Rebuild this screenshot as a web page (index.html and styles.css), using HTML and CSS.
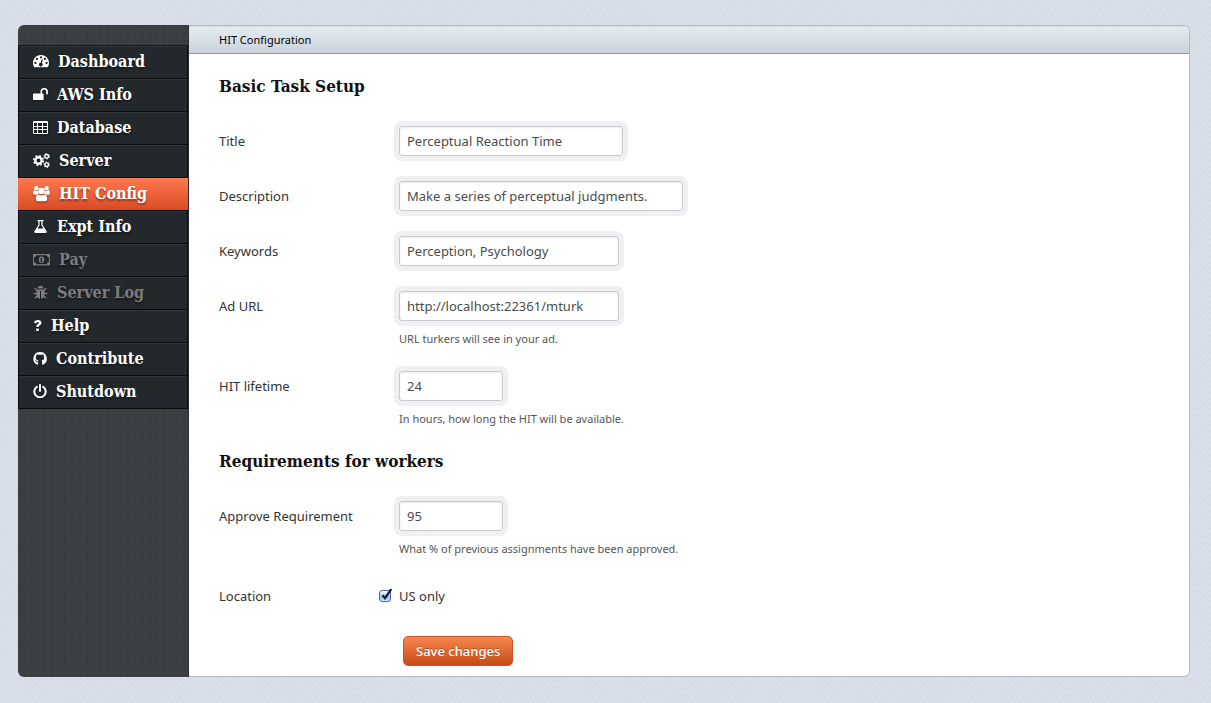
FILE: index.html
```html
<!DOCTYPE html>
<html lang="en">
<head>
<meta charset="utf-8">
<title>HIT Configuration</title>
<link rel="stylesheet" href="styles.css">
</head>
<body>
<div class="app">
  <nav class="sidebar">
    <ul class="nav">
      <li><a class="nav-link" href="#dashboard"><svg width="16" height="16" viewBox="0 0 16 16"><path fill-rule="evenodd" d="M8 1a8 8 0 0 1 8 8c0 1.500-.4 3-1.200 4.200H1.200A8 8 0 0 1 8 1zM8 2.200a1.100 1.100 0 1 0 0 2.200 1.100 1.100 0 0 0 0-2.200zM4 3.800A1.100 1.100 0 1 0 4 6a1.100 1.100 0 0 0 0-2.200zM12 3.800A1.100 1.100 0 1 0 12 6a1.100 1.100 0 0 0 0-2.200zM2.400 7.800a1.100 1.100 0 1 0 0 2.200 1.100 1.100 0 0 0 0-2.200zM13.600 7.800a1.100 1.100 0 1 0 0 2.200 1.100 1.100 0 0 0 0-2.200zM8.700 5.300 7.600 8.700a1.800 1.800 0 1 0 1.200.300l1-3.400z"/></svg>Dashboard</a></li>
      <li><a class="nav-link" href="#aws"><svg width="15" height="16" viewBox="0 0 15 16"><path d="M1 6.500h6.500V4.600a3.700 3.700 0 0 1 7.400 0v2.200q0 .6-.6.600h-.6q-.5 0-.5-.6V4.600a2 2 0 0 0-4.100 0v1.900h.6q.9 0 .9.900v4.800q0 .9-.9.900H.9Q0 13.100 0 12.200V7.400q0-.9 1-.9z"/></svg>AWS Info</a></li>
      <li><a class="nav-link" href="#database"><svg width="15" height="16" viewBox="0 0 15 16"><path fill-rule="evenodd" d="M1.200 1h12.600Q15 1 15 2.200v10.600q0 1.200-1.200 1.200H1.200Q0 14 0 12.800V2.200Q0 1 1.200 1zM1 3v3h3V3zm4 0v3h4V3zm5 0v3h4V3zM1 7v2h3V7zm4 0v2h4V7zm5 0v2h4V7zM1 10v3h3v-3zm4 0v3h4v-3zm5 0v3h4v-3z"/></svg>Database</a></li>
      <li><a class="nav-link" href="#server"><svg width="17" height="16" viewBox="0 0 17 16" fill="none"><circle cx="5.500" cy="7.500" r="3.200" stroke="currentColor" stroke-width="2.400"/><circle cx="5.500" cy="7.500" r="4.900" stroke="currentColor" stroke-width="1.500" stroke-dasharray="2 1.850"/><circle cx="13.700" cy="3.300" r="1.800" stroke="currentColor" stroke-width="1.400"/><circle cx="13.700" cy="3.300" r="2.800" stroke="currentColor" stroke-width="1" stroke-dasharray="1.400 1.530"/><circle cx="13.700" cy="11.700" r="1.800" stroke="currentColor" stroke-width="1.400"/><circle cx="13.700" cy="11.700" r="2.800" stroke="currentColor" stroke-width="1" stroke-dasharray="1.400 1.530"/></svg>Server</a></li>
      <li><a class="nav-link active" aria-current="page" href="#hit"><svg width="17" height="16" viewBox="0 0 17 16"><circle cx="3.400" cy="2.200" r="2.200"/><circle cx="13.600" cy="2.200" r="2.200"/><path d="M0 7q0-3 1.300-3 2 1.400 3.900.7-.2 1.900.9 3.100-1.500 0-2.300 1H1.500Q0 8.800 0 7zM17 7q0-3-1.300-3-2 1.400-3.900.7.2 1.900-.9 3.100 1.500 0 2.300 1h2.300q1.500 0 1.500-1.800z"/><circle cx="8.500" cy="5" r="3.200"/><path d="M2.800 13q0-4.600 2.700-4.600 3 2 6 0 2.700 0 2.700 4.600 0 2.300-2.200 2.300H5q-2.200 0-2.200-2.300z"/></svg>HIT Config</a></li>
      <li><a class="nav-link" href="#expt"><svg width="15" height="16" viewBox="0 0 15 16"><path fill-rule="evenodd" d="M4.500 1h6v1.200h-.9v3.700l3.900 6.200q.9 1.900-1.200 1.900H2.700q-2.100 0-1.200-1.900l3.900-6.200V2.200h-.9zM6.600 2.200v4L4.500 9.500h6L8.400 6.200v-4z"/></svg>Expt Info</a></li>
      <li><a class="nav-link muted" href="#pay"><svg width="17" height="16" viewBox="0 0 17 16"><path fill-rule="evenodd" d="M0 2h17v11.500H0zM3.300 3.200a2.200 2.200 0 0 1-2.200 2.100v4.900a2.200 2.200 0 0 1 2.200 2.100h10.400a2.200 2.200 0 0 1 2.200-2.100V5.300a2.200 2.200 0 0 1-2.200-2.100zM8.500 4.500q2.700 0 2.700 3.200t-2.700 3.300-2.700-3.300T8.500 4.500zm-.4 1.500L7 6.900l.5.500.4-.300V9h-.8v.8h2.800V9H9V6z"/></svg>Pay</a></li>
      <li><a class="nav-link muted" href="#log"><svg width="15" height="16" viewBox="0 0 15 16"><path d="M4.600 3.600a2.900 2.900 0 0 1 5.800 0zM3.500 4.500h8v5.500q0 3.500-3.500 3.700V6H7v7.700q-3.500-.2-3.500-3.700z"/><path d="M4 5.500 1.700 3.200M11 5.500l2.300-2.300M4 8.500H.6M11 8.500h3.400M4.300 10.800l-2.500 2.500M10.700 10.800l2.500 2.500" fill="none" stroke="currentColor" stroke-width="1.300"/></svg>Server Log</a></li>
      <li><a class="nav-link" href="#help"><svg width="9" height="16" viewBox="0 0 9 16"><path d="M1 4.700Q1.500 2 4.700 2q3.800 0 3.800 3 0 1.700-2.200 2.800-.6.400-.6 1.300H3.300q-.1-2.100 1.300-2.800 1.200-.7 1.200-1.400 0-.9-1.100-.9-1 0-1.700 1.500zM3.200 10.500h2.600v2.600H3.200z"/></svg>Help</a></li>
      <li><a class="nav-link" href="#contribute"><svg width="14" height="16" viewBox="0 0 14 16"><path d="M7 1a6.700 6.700 0 0 0-2.700 12.800q.8.200.8-.4v-2.200q-1.800.3-2.300-1-.3-.7-.8-1 1-.3 1.600.8.500.7 1.500.4l.3-.8Q2.700 9.200 2.800 6.800q0-1 .7-1.800-.2-.8.1-1.700.9 0 1.800.7 1.600-.4 3.200 0 .9-.7 1.800-.7.3.9.100 1.700.7.800.7 1.800.1 2.400-2.600 2.800.5.500.5 1.400v2.400q0 .6.800.4A6.700 6.700 0 0 0 7 1z"/></svg>Contribute</a></li>
      <li><a class="nav-link" href="#shutdown"><svg width="14" height="16" viewBox="0 0 14 16"><path d="M3.800 2.900a5.700 5.700 0 1 0 6.400 0M7 1v6" fill="none" stroke="currentColor" stroke-width="2" stroke-linecap="round"/></svg>Shutdown</a></li>
    </ul>
  </nav>
  <main class="panel">
    <header class="panel-header">HIT Configuration</header>
    <form class="form">
      <h2 class="heading">Basic Task Setup</h2>
      <div class="row"><label class="label" for="title">Title</label><div class="field"><input class="input medium" id="title" type="text" value="Perceptual Reaction Time"></div></div>
      <div class="row"><label class="label" for="description">Description</label><div class="field"><input class="input large" id="description" type="text" value="Make a series of perceptual judgments."></div></div>
      <div class="row"><label class="label" for="keywords">Keywords</label><div class="field"><input class="input" id="keywords" type="text" value="Perception, Psychology"></div></div>
      <div class="row"><label class="label" for="url">Ad URL</label><div class="field"><input class="input" id="url" type="text" value="http://localhost:22361/mturk"><p class="help">URL turkers will see in your ad.</p></div></div>
      <div class="row"><label class="label" for="lifetime">HIT lifetime</label><div class="field"><input class="input small" id="lifetime" type="text" value="24"><p class="help">In hours, how long the HIT will be available.</p></div></div>
      <h2 class="heading">Requirements for workers</h2>
      <div class="row"><label class="label" for="approve">Approve Requirement</label><div class="field"><input class="input small" id="approve" type="text" value="95"><p class="help">What % of previous assignments have been approved.</p></div></div>
      <div class="row"><span class="label narrow">Location</span><label class="check"><span class="box"><input class="checkbox" type="checkbox" checked><svg class="tick" width="14" height="14" viewBox="0 0 14 14"><path d="M3.500 7.200 6 10.200 12.300 1.200" fill="none" stroke="#0b1733" stroke-width="2.200"/></svg></span>US only</label></div>
      <div class="actions"><button class="save" type="button">Save changes</button></div>
    </form>
  </main>
</div>
</body>
</html>
```
FILE: styles.css
```css
* { box-sizing: border-box; }

body {
  margin: 0;
  color: #333;
  font: 13px/20px "Noto Sans", "Open Sans", sans-serif;
  background:
    repeating-linear-gradient(45deg, rgba(255, 255, 255, .06) 0 2px, transparent 2px 4px),
    repeating-linear-gradient(135deg, rgba(120, 140, 175, .03) 0 2px, transparent 2px 4px),
    #d7dee8;
}

.app {
  display: flex;
  min-height: 100vh;
  padding: 25px 21px 26px 18px;
}

.sidebar {
  flex: 0 0 171px;
  padding-top: 20px;
  border-right: 1px solid #2b2f31;
  border-radius: 6px 0 0 6px;
  background:
    radial-gradient(circle at 2px 3px, rgba(255, 255, 255, .02) 1px, transparent 2px) 0 0 / 7px 5px,
    radial-gradient(circle at 3px 2px, rgba(0, 0, 0, .04) 1px, transparent 2px) 0 0 / 11px 7px,
    #393e41;
}

.nav {
  margin: 0;
  padding: 0;
  list-style: none;
  border: 1px solid #080a0b;
  border-top-color: #15191a;
}

.nav li + li { border-top: 1px solid #080a0b; }

.nav-link {
  display: flex;
  align-items: center;
  gap: 9px;
  height: 32px;
  padding-left: 14px;
  color: #fff;
  font: bold 16px/20px "DejaVu Serif Condensed", "DejaVu Serif", serif;
  text-decoration: none;
  text-shadow: 0 2px 2px rgba(0, 0, 0, .4);
  background: #22282b;
  box-shadow: inset 0 1px #303639;
}

.nav-link svg {
  fill: currentColor;
  filter: drop-shadow(0 1px 1px rgba(0, 0, 0, .4));
}

.nav-link svg[fill="none"] { fill: none; }

.nav-link.active {
  margin: 0 -1px;
  padding-left: 15px;
  background: linear-gradient(#ff7850, #d84b25);
  box-shadow: inset 0 1px #ff8058;
}

.nav-link.muted { color: #7d7d7d; }

.panel {
  flex: 1;
  min-width: 0;
  overflow: hidden;
  background: #fff;
  border: 1px solid #b2bbc5;
  border-left: 0;
  border-radius: 0 6px 6px 0;
}

.panel-header {
  height: 28px;
  padding-left: 30px;
  color: #000;
  font-size: 11px;
  line-height: 28px;
  background: linear-gradient(#e5edf3, #cbd3da);
  border-bottom: 1px solid #90979d;
  box-shadow: inset 0 1px #d5dde4;
}

.form { padding: 22px 30px 10px; }

.heading {
  margin: 0 0 30px;
  color: #111;
  font: bold 17px/20px "DejaVu Serif Condensed", "DejaVu Serif", serif;
}

.row {
  display: flex;
  align-items: flex-start;
  margin-bottom: 25px;
}

.label {
  flex: 0 0 180px;
  line-height: 30px;
}

.label.narrow { flex-basis: 160px; }

.field { flex: 1; }

.input {
  display: block;
  width: 220px;
  max-width: 100%;
  height: 30px;
  padding: 0 7px;
  color: #4b4b4b;
  font: inherit;
  background: #fff;
  border: 1px solid #c8cace;
  border-radius: 3px;
  box-shadow: 0 0 0 5px #eff0f2, inset 0 1px 2px rgba(0, 0, 0, .08);
}

.medium { width: 224px; }
.large { width: 284px; }
.small { width: 104px; }

.help {
  margin: 8px 0 -3px;
  color: #555;
  font-size: 11px;
}

.check {
  display: flex;
  align-items: center;
  gap: 8px;
  height: 30px;
}

.box {
  position: relative;
  display: flex;
}

.checkbox {
  appearance: none;
  width: 12px;
  height: 12px;
  margin: 0;
  background: linear-gradient(#fff, #8fc6f7 60%, #c8f0ff);
  border: 1px solid #5a5fa5;
  border-radius: 3px;
}

.tick {
  position: absolute;
  top: -2px;
  left: 0;
  pointer-events: none;
}

.actions { padding-left: 184px; }

.save {
  height: 30px;
  padding: 0 12px;
  color: #fff;
  font: inherit;
  font-weight: 500;
  text-shadow: 0 -1px rgba(0, 0, 0, .25);
  background: linear-gradient(#f7864e, #c64b18);
  border: 1px solid #c9562a;
  border-radius: 5px;
}
```
